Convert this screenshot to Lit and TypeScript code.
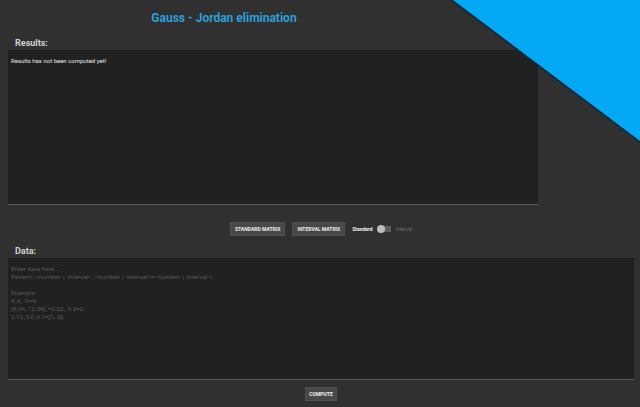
import { LitElement, html, css } from "lit";
import { customElement, state } from "lit/decorators.js";

const PLACEHOLDER = [
  "Enter data here...",
  "Pattern: <number | interval>_<number | interval>=<number | interval>;",
  "",
  "Example:",
  "4_8_-5=4;",
  "[8.66, 12.34]_+0.22_-5.2=2;",
  "2.12_3.0_6.1=[1, 2];",
].join("\n");

@customElement("app-root")
export class AppRoot extends LitElement {
  static styles = css`
    :host {
      display: block;
      position: relative;
      min-height: 100vh;
      overflow: hidden;
      box-sizing: border-box;
      background: #303030;
      color: #d0d0d0;
      font-family: Roboto, "Liberation Sans", sans-serif;
      font-size: 6px;
      line-height: 8px;
    }
    .corner {
      position: absolute;
      top: 0;
      right: 0;
      width: 190px;
      height: 143px;
    }
    .page {
      display: flex;
      flex-direction: column;
      padding: 8px 6px 6px 8px;
    }
    h1 {
      width: 69%;
      margin: 0;
      text-align: center;
      color: #2b9fd9;
      font-size: 12px;
      line-height: 20px;
      font-weight: 700;
    }
    .label {
      padding-left: 7px;
      font-size: 9px;
      line-height: 14px;
      font-weight: 700;
    }
    .results-label {
      margin-top: 8px;
    }
    textarea {
      display: block;
      box-sizing: border-box;
      margin: 0;
      padding: 7px 3px;
      border: 0;
      border-bottom: 1px solid #5a5a5a;
      border-radius: 0;
      outline: 0;
      resize: none;
      background: #212121;
      color: #e8e8e8;
      font: inherit;
    }
    textarea::placeholder {
      color: #606060;
      opacity: 1;
      font-family: "Open Sans", Roboto, sans-serif;
    }
    .results {
      width: calc(85% - 2px);
      height: 155px;
    }
    .data {
      width: 100%;
      height: 122px;
    }
    .actions {
      display: flex;
      justify-content: center;
      align-items: center;
      gap: 7px;
      padding: 17px 0 8px;
    }
    .submit {
      padding: 7px 0 0;
    }
    button {
      box-sizing: border-box;
      height: 14px;
      padding: 0 4px;
      border: 1px solid #505050;
      border-radius: 0;
      background: #484848;
      color: #f0f0f0;
      font: inherit;
      font-size: 5px;
      font-weight: 700;
      line-height: 12px;
    }
    .submit button {
      padding: 0 3px;
    }
    .mode {
      display: flex;
      align-items: center;
      gap: 4px;
      color: #6c6c6c;
      font-size: 5px;
    }
    .mode .on {
      color: #f0f0f0;
      font-weight: 700;
    }
    .switch {
      appearance: none;
      display: flex;
      align-items: center;
      width: 15px;
      height: 9px;
      margin: 0;
      border-radius: 4px;
      background: linear-gradient(#5c5c5c, #5c5c5c) center / 13px 6px no-repeat;
    }
    .switch::before {
      content: "";
      width: 8px;
      height: 8px;
      border-radius: 50%;
      background: #bdbdbd;
    }
    .switch:checked {
      justify-content: flex-end;
    }
  `;

  @state() private interval = false;
  @state() private data = "";

  private toggle(e: Event) {
    this.interval = (e.target as HTMLInputElement).checked;
  }

  render() {
    return html`
      <main class="page">
        <h1>Gauss - Jordan elimination</h1>
        <label class="label results-label" for="results">Results:</label>
        <textarea class="results" id="results" readonly .value=${"Results has not been computed yet!"}></textarea>
        <div class="actions">
          <button type="button">STANDARD MATRIX</button>
          <button type="button">INTERVAL MATRIX</button>
          <label class="mode">
            <span class=${this.interval ? "" : "on"}>Standard</span>
            <input class="switch" type="checkbox" role="switch" .checked=${this.interval} @change=${this.toggle} />
            <span class=${this.interval ? "on" : ""}>Interval</span>
          </label>
        </div>
        <label class="label" for="data">Data:</label>
        <textarea class="data" id="data" placeholder=${PLACEHOLDER} .value=${this.data}></textarea>
        <div class="actions submit"><button type="button">COMPUTE</button></div>
      </main>
      <svg class="corner" viewBox="0 0 190 143" aria-hidden="true">
        <path d="M0 0H190V143Z" fill="#0b2a3c" />
        <path d="M3 0H190V141Z" fill="#03a9f4" />
      </svg>
    `;
  }
}
